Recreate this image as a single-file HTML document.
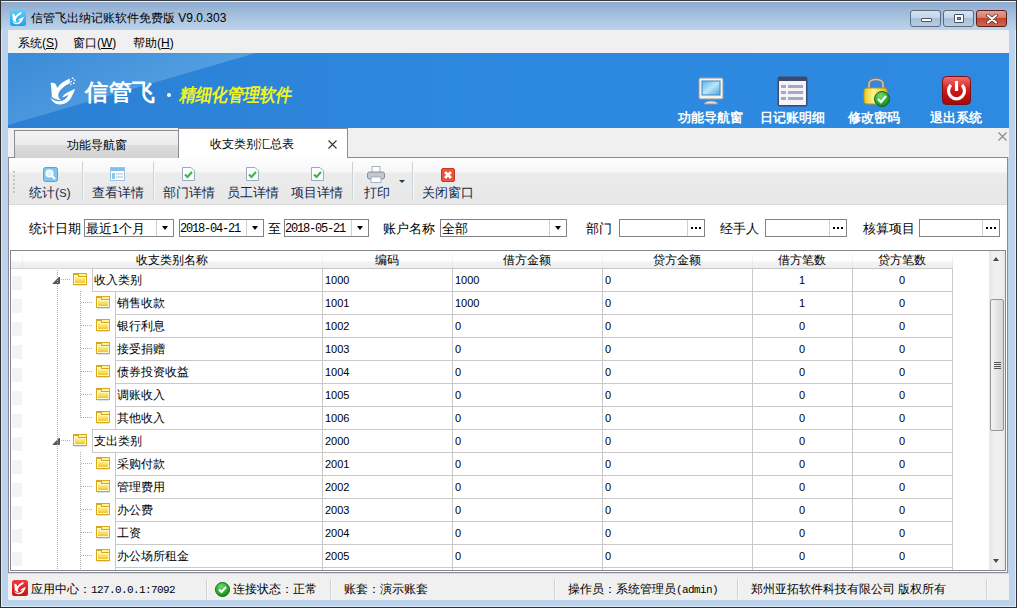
<!DOCTYPE html><html><head><meta charset="utf-8"><style>*{box-sizing:border-box;margin:0;padding:0}
html,body{width:1017px;height:608px;overflow:hidden;background:#bcd3eb;font-family:"Liberation Sans",sans-serif;font-size:12px;color:#000}
.a{position:absolute}
#frame{left:0;top:0;width:1017px;height:608px;border:1px solid #2e2e2e;border-top-color:#3a3a3a;background:#bcd3eb;box-shadow:inset 1px 0 0 #dcecfb,inset -1px 0 0 #dcecfb,inset 0 -1px 0 #dcecfb}
#title{left:1px;top:1px;width:1015px;height:29px;border-top:1px solid #eef4fa;background:linear-gradient(#8eabcf,#a6c0de 50%,#bdd4ec)}
#ttext{left:31px;top:10px;font-size:12px;color:#000;white-space:nowrap}
.wb{top:10px;height:17px;border:1px solid #5b6b80;border-radius:3px;background:linear-gradient(#d6e3f1 0,#c4d6ea 45%,#a9c0da 50%,#b9cde3 100%)}
#menu{left:8px;top:30px;width:1001px;height:23px;background:#f0f0f0}
#menu span{position:absolute;top:5px;font-size:12px;color:#000;white-space:nowrap}
#banner{left:8px;top:53px;width:1001px;height:75px;background:#2d8ae0;overflow:hidden}
.bt{position:absolute;top:56px;color:#fff;font-weight:bold;font-size:13px;white-space:nowrap;width:80px;text-align:center}
#tabstrip{left:8px;top:128px;width:1001px;height:29px;background:#f0f0f0}
#tab1{left:14px;top:130px;width:165px;height:28px;border:1px solid #898c95;border-bottom:none;background:linear-gradient(#f2f2f2 0,#ebebeb 50%,#dddddd 51%,#d3d3d3 100%)}
#tab2{left:178px;top:128px;width:170px;height:30px;border:1px solid #898c95;border-bottom:none;background:#fff}
#content{left:8px;top:157px;width:1000px;height:416px;background:#fff;border:1px solid #898c95}
#toolbar{left:9px;top:158px;width:998px;height:47px;background:linear-gradient(#fefefe 0,#f7f7f7 14px,#ececec 15px,#e7e7e7 45px);border-bottom:1px solid #dadada}
.tt{position:absolute;top:27px;color:#142a4c;font-size:12.5px;white-space:nowrap}
.tsep{position:absolute;top:4px;width:2px;height:37px;border-left:1px solid #cdd0d4;border-right:1px solid #fafafa}
#status{left:8px;top:573px;width:1001px;height:27px;background:#f0f0f0;border-top:1px solid #d8d8d8}
.lbl{position:absolute;font-size:12.5px;color:#000;white-space:nowrap}
.box{position:absolute;top:219px;height:18px;border:1px solid #828282;background:#fff}
.btn{position:absolute;top:0;bottom:0;right:0;width:17px;border-left:1px solid #d0d0d0;background:#fff}
.arr{position:absolute;left:5px;top:6px;width:0;height:0;border-left:3.5px solid transparent;border-right:3.5px solid transparent;border-top:4px solid #000}
.dots{position:absolute;left:3px;top:7px;width:11px;height:2px;background:repeating-linear-gradient(90deg,#000 0,#000 2px,transparent 2px,transparent 4px)}
.mono{font-family:"Liberation Mono",monospace;font-size:12px;letter-spacing:-1.2px}
#grid{left:10px;top:250px;width:996px;height:321px;border:1px solid #828790;background:#fff;overflow:hidden}
.hdr{background:linear-gradient(#fff 0,#fff 10px,#f1f2f4 11px,#eceef0 17px);border-bottom:1px solid #d5d5d5}
.ht{top:1px;text-align:center;font-size:12px;color:#000;white-space:nowrap}
.hsep{top:1px;width:1px;height:16px;background:linear-gradient(#fff,#e2e2e2)}
.ind{left:1px;width:10px;height:14px;background:#f3f3f5}
.cell{border:1px solid #c9c9c9;background:transparent}
.nm{font-size:12px;color:#000;white-space:nowrap}
.num{font-family:"Liberation Sans",sans-serif;font-size:11px;color:#000;white-space:nowrap}
.hd{height:1px;background:repeating-linear-gradient(90deg,#b0b0b0 0,#b0b0b0 1px,transparent 1px,transparent 2px)}
.vd{width:1px;background:repeating-linear-gradient(180deg,#b0b0b0 0,#b0b0b0 1px,transparent 1px,transparent 2px)}
#vsb{left:978px;top:0;width:16px;height:319px;background:linear-gradient(90deg,#e6e6e6,#f0f0f0 30%,#f0f0f0 70%,#e8e8e8)}
.sbup{left:4px;top:6px;width:0;height:0;border-left:3.5px solid transparent;border-right:3.5px solid transparent;border-bottom:4px solid #4a4a4a}
.sbdn{left:4px;top:308px;width:0;height:0;border-left:3.5px solid transparent;border-right:3.5px solid transparent;border-top:4px solid #4a4a4a}
.sbthumb{left:1px;top:48px;width:14px;height:132px;border:1px solid #979797;border-radius:2px;background:linear-gradient(90deg,#f4f4f4,#e6e6e6 50%,#d6d6d6)}
.grip{left:3px;top:62px;width:7px;height:7px;background:repeating-linear-gradient(180deg,#555 0,#555 1px,transparent 1px,transparent 2px)}
.sl{font-size:12px}
.sl .mono{font-size:11px;letter-spacing:-0.6px}
</style></head><body>
<svg width="0" height="0" style="position:absolute"><defs><linearGradient id="fgrad" x1="0" y1="0" x2="0" y2="1"><stop offset="0" stop-color="#fff7b0"/><stop offset="0.5" stop-color="#fbe46a"/><stop offset="1" stop-color="#f0c434"/></linearGradient></defs></svg>
<div id="frame" class="a"></div>
<div id="title" class="a"></div>
<svg class="a" style="left:10px;top:10px" width="16" height="16" viewBox="0 0 16 16"><defs><linearGradient id="ig" x1="0" y1="0" x2="0" y2="1"><stop offset="0" stop-color="#62ccf6"/><stop offset="1" stop-color="#1ea2e8"/></linearGradient></defs><rect x="0" y="0" width="16" height="16" rx="2.5" fill="url(#ig)"/>
<g transform="translate(-1,-2.3) scale(0.48)"><path d="M6.6,12.8 C8.5,12.6 10.5,12.8 11.5,14 C12.5,15.5 13,17 13.2,18.1 C16,14 20,11 25.7,8.6 L25.9,13.2 C20,16 15.5,20 14.5,23.5 C13.8,26 14.5,28.5 17.1,30.3 C12,30 8.5,28 7.9,26.3 C7.5,21 7.2,16 6.6,12.8 Z" fill="#fff"/>
<path d="M6.3,27 C7.5,31 11,34.5 15.5,34.5 C21,34.5 26,31 28,26 C29.5,23 30.5,21 30.9,18.7 C28,20.5 24,21.5 21,24 C19.5,25.5 18.5,26.5 18.4,27.3 C20.5,27 22.5,26 24.5,24.5 C23,28.5 20,31 15.5,31.2 C11,31.3 8,29.5 6.3,27 Z" fill="#fff"/></g></svg>
<div id="ttext" class="a">信管飞出纳记账软件免费版 V9.0.303</div>
<div class="a wb" style="left:910px;width:31px"><div class="a" style="left:10px;top:7px;width:11px;height:4px;background:#fff;border:1px solid #4a5464;border-radius:1px"></div></div>
<div class="a wb" style="left:943px;width:31px"><div class="a" style="left:10px;top:3px;width:10px;height:9px;background:#fff;border:1px solid #4a5464;border-radius:1px"><div class="a" style="left:2px;top:2px;width:4px;height:3px;background:#8aa4c4;border:1px solid #4a5464"></div></div></div>
<div class="a wb" style="left:976px;width:31px;border-color:#5a1f1f;background:linear-gradient(#e8a090 0,#d97a66 45%,#c2462e 50%,#d4654a 100%)">
<svg class="a" style="left:9px;top:3px" width="12" height="10" viewBox="0 0 12 10"><path d="M2 1.5 L10 8.5 M10 1.5 L2 8.5" stroke="#4a2a2a" stroke-width="3.6" stroke-linecap="round"/><path d="M2 1.5 L10 8.5 M10 1.5 L2 8.5" stroke="#fff" stroke-width="2.2" stroke-linecap="round"/></svg></div>
<div id="menu" class="a">
 <span style="left:10px">系统(<u>S</u>)</span>
 <span style="left:65px">窗口(<u>W</u>)</span>
 <span style="left:125px">帮助(<u>H</u>)</span>
</div>
<div id="banner" class="a">
<svg class="a" style="left:0;top:0" width="1001" height="75">
<defs>
<linearGradient id="bl" x1="0" y1="0" x2="1" y2="0.6"><stop offset="0" stop-color="#3a8ad6"/><stop offset="1" stop-color="#5ea6e6"/></linearGradient>
<linearGradient id="bd" x1="0" y1="0" x2="1" y2="0"><stop offset="0" stop-color="#2b80d3"/><stop offset="0.5" stop-color="#2d89df"/><stop offset="1" stop-color="#2e8ae0"/></linearGradient>
</defs>
<rect width="1001" height="75" fill="url(#bd)"/>
<polygon points="0,0 248,0 0,72" fill="url(#bl)"/>
</svg>
<svg class="a" style="left:36px;top:17px" width="40" height="40" viewBox="0 0 40 40">
<path d="M6.6,12.8 C8.5,12.6 10.5,12.8 11.5,14 C12.5,15.5 13,17 13.2,18.1 C16,14 20,11 25.7,8.6 L25.9,13.2 C20,16 15.5,20 14.5,23.5 C13.8,26 14.5,28.5 17.1,30.3 C12,30 8.5,28 7.9,26.3 C7.5,21 7.2,16 6.6,12.8 Z" fill="#fff"/>
<path d="M6.3,27 C7.5,31 11,34.5 15.5,34.5 C21,34.5 26,31 28,26 C29.5,23 30.5,21 30.9,18.7 C28,20.5 24,21.5 21,24 C19.5,25.5 18.5,26.5 18.4,27.3 C20.5,27 22.5,26 24.5,24.5 C23,28.5 20,31 15.5,31.2 C11,31.3 8,29.5 6.3,27 Z" fill="#fff"/>
<circle cx="28.6" cy="8.2" r="0.9" fill="#fff" opacity="0.9"/><circle cx="30.6" cy="10.2" r="0.9" fill="#fff" opacity="0.9"/><circle cx="27.2" cy="11.6" r="0.9" fill="#fff" opacity="0.9"/><circle cx="29.8" cy="13.2" r="0.9" fill="#fff" opacity="0.9"/><circle cx="26.8" cy="14.4" r="0.8" fill="#fff" opacity="0.8"/>
</svg>
<div class="a" style="left:77px;top:24px;font-size:23px;font-weight:bold;color:#fff;white-space:nowrap;letter-spacing:0.5px">信管飞</div>
<div class="a" style="left:159px;top:40px;width:4px;height:4px;border-radius:2px;background:#fff"></div>
<div class="a" style="left:174px;top:31px;font-size:16px;font-weight:bold;color:#f2f51e;white-space:nowrap;transform:skewX(-10deg) scaleY(1.12);transform-origin:0 0">精细化管理软件</div>
<!-- right icons -->
<svg class="a" style="left:690px;top:24px" width="26" height="28" viewBox="0 0 26 28">
<defs><linearGradient id="scr" x1="0" y1="0" x2="1" y2="1"><stop offset="0" stop-color="#5ab4ec"/><stop offset="0.5" stop-color="#b8e6fc"/><stop offset="1" stop-color="#4aa6e0"/></linearGradient></defs>
<rect x="1" y="1" width="24" height="21" rx="1.5" fill="#f2f2f2" stroke="#9a9a9a"/>
<rect x="4" y="4" width="18" height="14" fill="url(#scr)" stroke="#3e86c0"/>
<path d="M6 27 C7 23 19 23 20 27z" fill="#e4e4e4" stroke="#9a9a9a"/>
</svg>
<svg class="a" style="left:769px;top:23px" width="31" height="31" viewBox="0 0 31 31">
<rect x="0.5" y="0.5" width="30" height="30" rx="2" fill="#3c4a6e"/>
<rect x="2" y="5" width="27" height="24" fill="#f4f4f8"/>
<rect x="4" y="9" width="5" height="3" fill="#a8a8c4"/><rect x="11" y="9" width="15" height="3" fill="#a8a8c4"/>
<rect x="4" y="15" width="5" height="3" fill="#a8a8c4"/><rect x="11" y="15" width="15" height="3" fill="#a8a8c4"/>
<rect x="4" y="21" width="5" height="3" fill="#a8a8c4"/><rect x="11" y="21" width="15" height="3" fill="#a8a8c4"/>
</svg>
<svg class="a" style="left:855px;top:23px" width="28" height="31" viewBox="0 0 28 31">
<defs><linearGradient id="lk" x1="0" y1="0" x2="1" y2="0"><stop offset="0" stop-color="#e8c820"/><stop offset="0.4" stop-color="#fff48a"/><stop offset="1" stop-color="#e0b810"/></linearGradient>
<radialGradient id="gc" cx="0.4" cy="0.3" r="0.7"><stop offset="0" stop-color="#6ee06a"/><stop offset="1" stop-color="#108a18"/></radialGradient></defs>
<path d="M6 13 V8 C6 2 20 2 20 8 V13" fill="none" stroke="#7a7a7a" stroke-width="3.5"/>
<path d="M6 13 V8 C6 2 20 2 20 8 V13" fill="none" stroke="#c8c8c8" stroke-width="1.5"/>
<rect x="1" y="12" width="23" height="16" rx="3" fill="url(#lk)" stroke="#b89410"/>
<circle cx="19" cy="23" r="7.5" fill="url(#gc)" stroke="#0c6a12"/>
<path d="M15 23 L18 26 L23 20" fill="none" stroke="#fff" stroke-width="2.2"/>
</svg>
<svg class="a" style="left:934px;top:23px" width="29" height="30" viewBox="0 0 29 30">
<defs><linearGradient id="pw" x1="0" y1="0" x2="0" y2="1"><stop offset="0" stop-color="#f07070"/><stop offset="0.5" stop-color="#d01818"/><stop offset="1" stop-color="#a00808"/></linearGradient></defs>
<rect x="0.5" y="0.5" width="28" height="28" rx="4" fill="url(#pw)" stroke="#7a1010"/>
<path d="M9 9 A8 8 0 1 0 20 9" fill="none" stroke="#fff" stroke-width="3.2"/>
<line x1="14.5" y1="5" x2="14.5" y2="15" stroke="#fff" stroke-width="3.2"/>
</svg>
<div class="bt" style="left:662px">功能导航窗</div>
<div class="bt" style="left:744px">日记账明细</div>
<div class="bt" style="left:826px">修改密码</div>
<div class="bt" style="left:908px">退出系统</div>
</div>
<div id="tabstrip" class="a"></div>
<div id="content" class="a"></div>
<div id="tab1" class="a"><div class="a" style="left:52px;top:6px;font-size:12px;color:#000;white-space:nowrap">功能导航窗</div></div>
<div id="tab2" class="a"><div class="a" style="left:31px;top:7px;font-size:12px;color:#000;white-space:nowrap">收支类别汇总表</div>
<svg class="a" style="left:149px;top:11px" width="9" height="9"><path d="M0.5 0.5 L8.5 8.5 M8.5 0.5 L0.5 8.5" stroke="#333" stroke-width="1.1"/></svg></div>
<svg class="a" style="left:998px;top:132px" width="9" height="9"><path d="M0.5 0.5 L8.5 8.5 M8.5 0.5 L0.5 8.5" stroke="#888" stroke-width="1.1"/></svg>
<div id="toolbar" class="a">
 <div class="a" style="left:4px;top:13px;width:2px;height:22px;background:repeating-linear-gradient(180deg,#c4c4c4 0,#c4c4c4 2px,transparent 2px,transparent 4px)"></div>
 <svg class="a" style="left:34px;top:9px" width="15" height="15" viewBox="0 0 15 15"><rect x="0.5" y="0.5" width="14" height="14" rx="2" fill="#7dc7f2" stroke="#4aa8e0"/><circle cx="6.5" cy="6.5" r="3.3" fill="#e0f4ff" stroke="#fff" stroke-width="1.4"/><line x1="9" y1="9" x2="12" y2="12" stroke="#fff" stroke-width="2"/></svg>
 <div class="tt" style="left:20px">统计(<span style="font-size:11px">S</span>)</div>
 <div class="tsep" style="left:73px"></div>
 <svg class="a" style="left:101px;top:9px" width="15" height="14" viewBox="0 0 15 14"><rect x="0.5" y="0.5" width="14" height="13" fill="#fff" stroke="#9cc4e4"/><rect x="1" y="1" width="13" height="3" fill="#7ec0ee"/><rect x="2" y="6" width="3" height="6" fill="#8cc4ec"/><line x1="6" y1="7" x2="13" y2="7" stroke="#a8b8c8"/><line x1="6" y1="10" x2="13" y2="10" stroke="#a8b8c8"/></svg>
 <div class="tt" style="left:83px">查看详情</div>
 <div class="tsep" style="left:144px"></div>
 <svg class="a" style="left:173px;top:9px" width="13" height="14" viewBox="0 0 13 14"><path d="M0.5 0.5 H9 L12.5 4 V13.5 H0.5z" fill="#fafcff" stroke="#9aaac0"/><path d="M3 7.5 L5.5 10 L10 5" fill="none" stroke="#3cb43c" stroke-width="2"/></svg>
 <div class="tt" style="left:154px">部门详情</div>
 <svg class="a" style="left:237px;top:9px" width="13" height="14" viewBox="0 0 13 14"><path d="M0.5 0.5 H9 L12.5 4 V13.5 H0.5z" fill="#fafcff" stroke="#9aaac0"/><path d="M3 7.5 L5.5 10 L10 5" fill="none" stroke="#3cb43c" stroke-width="2"/></svg>
 <div class="tt" style="left:218px">员工详情</div>
 <svg class="a" style="left:302px;top:9px" width="13" height="14" viewBox="0 0 13 14"><path d="M0.5 0.5 H9 L12.5 4 V13.5 H0.5z" fill="#fafcff" stroke="#9aaac0"/><path d="M3 7.5 L5.5 10 L10 5" fill="none" stroke="#3cb43c" stroke-width="2"/></svg>
 <div class="tt" style="left:282px">项目详情</div>
 <div class="tsep" style="left:343px"></div>
 <svg class="a" style="left:358px;top:8px" width="18" height="17" viewBox="0 0 18 17"><rect x="5" y="0.5" width="8" height="6" fill="#fff" stroke="#a0b4c8"/><rect x="0.5" y="6" width="17" height="7" rx="2" fill="#c4c8cc" stroke="#8a8e92"/><rect x="4" y="11" width="10" height="5.5" fill="#fff" stroke="#a0b4c8"/></svg>
 <div class="tt" style="left:355px">打印</div>
 <div class="a" style="left:390px;top:22px;width:0;height:0;border-left:3px solid transparent;border-right:3px solid transparent;border-top:3px solid #1e395b"></div>
 <div class="tsep" style="left:403px"></div>
 <svg class="a" style="left:432px;top:10px" width="14" height="14" viewBox="0 0 14 14"><rect x="0.5" y="0.5" width="13" height="13" rx="1.5" fill="#e8553a" stroke="#c83a20"/><path d="M4 4 L10 10 M10 4 L4 10" stroke="#fff" stroke-width="2.6"/></svg>
 <div class="tt" style="left:413px">关闭窗口</div>
</div>
<!-- filter row -->
<div class="lbl" style="left:29px;top:221px">统计日期</div>
<div class="box" style="left:84px;width:90px"><div class="a" style="left:1px;top:1px;font-size:12.5px;white-space:nowrap">最近1个月</div><div class="btn"><div class="arr"></div></div></div>
<div class="box" style="left:179px;width:85px"><div class="a mono" style="left:0px;top:2px">2018-04-21</div><div class="btn"><div class="arr"></div></div></div>
<div class="lbl" style="left:268px;top:221px">至</div>
<div class="box" style="left:284px;width:85px"><div class="a mono" style="left:0px;top:2px">2018-05-21</div><div class="btn"><div class="arr"></div></div></div>
<div class="lbl" style="left:383px;top:221px">账户名称</div>
<div class="box" style="left:440px;width:127px"><div class="a" style="left:1px;top:1px;font-size:12.5px;white-space:nowrap">全部</div><div class="btn"><div class="arr"></div></div></div>
<div class="lbl" style="left:586px;top:221px">部门</div>
<div class="box" style="left:619px;width:86px"><div class="btn"><div class="dots"></div></div></div>
<div class="lbl" style="left:720px;top:221px">经手人</div>
<div class="box" style="left:765px;width:82px"><div class="btn"><div class="dots"></div></div></div>
<div class="lbl" style="left:863px;top:221px">核算项目</div>
<div class="box" style="left:919px;width:81px"><div class="btn"><div class="dots"></div></div></div>

<div id="grid" class="a">
<div class="a hdr" style="left:0;top:0;width:942px;height:18px"></div>
<div class="a ht" style="left:11px;width:300px">收支类别名称</div>
<div class="a hsep" style="left:11px"></div>
<div class="a ht" style="left:311px;width:130px">编码</div>
<div class="a hsep" style="left:311px"></div>
<div class="a ht" style="left:441px;width:150px">借方金额</div>
<div class="a hsep" style="left:441px"></div>
<div class="a ht" style="left:591px;width:150px">贷方金额</div>
<div class="a hsep" style="left:591px"></div>
<div class="a ht" style="left:741px;width:100px">借方笔数</div>
<div class="a hsep" style="left:741px"></div>
<div class="a ht" style="left:841px;width:100px">贷方笔数</div>
<div class="a hsep" style="left:841px"></div>
<div class="a hsep" style="left:941px"></div>
<div class="a ind" style="top:25px"></div>
<div class="a cell" style="left:81px;top:17px;width:231px;height:24px"></div>
<div class="a cell" style="left:311px;top:17px;width:131px;height:24px"></div>
<div class="a cell" style="left:441px;top:17px;width:151px;height:24px"></div>
<div class="a cell" style="left:591px;top:17px;width:151px;height:24px"></div>
<div class="a cell" style="left:741px;top:17px;width:101px;height:24px"></div>
<div class="a cell" style="left:841px;top:17px;width:101px;height:24px"></div>
<div class="a nm" style="left:83px;top:21px">收入类别</div>
<div class="a num" style="left:314px;top:23px">1000</div>
<div class="a num" style="left:444px;top:23px">1000</div>
<div class="a num" style="left:594px;top:23px">0</div>
<div class="a num" style="left:741px;width:100px;text-align:center;top:23px">1</div>
<div class="a num" style="left:841px;width:100px;text-align:center;top:23px">0</div>
<svg class="a" style="left:41px;top:25px" width="9" height="9"><path d="M1 7.5 L7.5 1 V7.5z" fill="#595959" stroke="#3c3c3c" stroke-width="0.8"/></svg>
<div class="a hd" style="left:50px;top:28px;width:9px"></div>
<svg class="a" style="left:62px;top:22px" width="14" height="13" viewBox="0 0 14 13" shape-rendering="crispEdges">
<rect x="1" y="12" width="12" height="1" fill="#c8cde0" opacity="0.6"/>
<rect x="0" y="0" width="14" height="12" fill="#d8a71c"/>
<path d="M1 2 H5 V4 H13 V11 H1 Z" fill="#fff8c8"/>
<path d="M2 3 H4 V5 H12 V10 H2 Z" fill="url(#fgrad)"/>
<rect x="6" y="1" width="7" height="2" fill="#fff2a0"/>
</svg>
<div class="a ind" style="top:48px"></div>
<div class="a cell" style="left:104px;top:40px;width:208px;height:24px"></div>
<div class="a cell" style="left:311px;top:40px;width:131px;height:24px"></div>
<div class="a cell" style="left:441px;top:40px;width:151px;height:24px"></div>
<div class="a cell" style="left:591px;top:40px;width:151px;height:24px"></div>
<div class="a cell" style="left:741px;top:40px;width:101px;height:24px"></div>
<div class="a cell" style="left:841px;top:40px;width:101px;height:24px"></div>
<div class="a nm" style="left:106px;top:44px">销售收款</div>
<div class="a num" style="left:314px;top:46px">1001</div>
<div class="a num" style="left:444px;top:46px">1000</div>
<div class="a num" style="left:594px;top:46px">0</div>
<div class="a num" style="left:741px;width:100px;text-align:center;top:46px">1</div>
<div class="a num" style="left:841px;width:100px;text-align:center;top:46px">0</div>
<div class="a hd" style="left:70px;top:51px;width:11px"></div>
<svg class="a" style="left:85px;top:45px" width="14" height="13" viewBox="0 0 14 13" shape-rendering="crispEdges">
<rect x="1" y="12" width="12" height="1" fill="#c8cde0" opacity="0.6"/>
<rect x="0" y="0" width="14" height="12" fill="#d8a71c"/>
<path d="M1 2 H5 V4 H13 V11 H1 Z" fill="#fff8c8"/>
<path d="M2 3 H4 V5 H12 V10 H2 Z" fill="url(#fgrad)"/>
<rect x="6" y="1" width="7" height="2" fill="#fff2a0"/>
</svg>
<div class="a ind" style="top:71px"></div>
<div class="a cell" style="left:104px;top:63px;width:208px;height:24px"></div>
<div class="a cell" style="left:311px;top:63px;width:131px;height:24px"></div>
<div class="a cell" style="left:441px;top:63px;width:151px;height:24px"></div>
<div class="a cell" style="left:591px;top:63px;width:151px;height:24px"></div>
<div class="a cell" style="left:741px;top:63px;width:101px;height:24px"></div>
<div class="a cell" style="left:841px;top:63px;width:101px;height:24px"></div>
<div class="a nm" style="left:106px;top:67px">银行利息</div>
<div class="a num" style="left:314px;top:69px">1002</div>
<div class="a num" style="left:444px;top:69px">0</div>
<div class="a num" style="left:594px;top:69px">0</div>
<div class="a num" style="left:741px;width:100px;text-align:center;top:69px">0</div>
<div class="a num" style="left:841px;width:100px;text-align:center;top:69px">0</div>
<div class="a hd" style="left:70px;top:74px;width:11px"></div>
<svg class="a" style="left:85px;top:68px" width="14" height="13" viewBox="0 0 14 13" shape-rendering="crispEdges">
<rect x="1" y="12" width="12" height="1" fill="#c8cde0" opacity="0.6"/>
<rect x="0" y="0" width="14" height="12" fill="#d8a71c"/>
<path d="M1 2 H5 V4 H13 V11 H1 Z" fill="#fff8c8"/>
<path d="M2 3 H4 V5 H12 V10 H2 Z" fill="url(#fgrad)"/>
<rect x="6" y="1" width="7" height="2" fill="#fff2a0"/>
</svg>
<div class="a ind" style="top:94px"></div>
<div class="a cell" style="left:104px;top:86px;width:208px;height:24px"></div>
<div class="a cell" style="left:311px;top:86px;width:131px;height:24px"></div>
<div class="a cell" style="left:441px;top:86px;width:151px;height:24px"></div>
<div class="a cell" style="left:591px;top:86px;width:151px;height:24px"></div>
<div class="a cell" style="left:741px;top:86px;width:101px;height:24px"></div>
<div class="a cell" style="left:841px;top:86px;width:101px;height:24px"></div>
<div class="a nm" style="left:106px;top:90px">接受捐赠</div>
<div class="a num" style="left:314px;top:92px">1003</div>
<div class="a num" style="left:444px;top:92px">0</div>
<div class="a num" style="left:594px;top:92px">0</div>
<div class="a num" style="left:741px;width:100px;text-align:center;top:92px">0</div>
<div class="a num" style="left:841px;width:100px;text-align:center;top:92px">0</div>
<div class="a hd" style="left:70px;top:97px;width:11px"></div>
<svg class="a" style="left:85px;top:91px" width="14" height="13" viewBox="0 0 14 13" shape-rendering="crispEdges">
<rect x="1" y="12" width="12" height="1" fill="#c8cde0" opacity="0.6"/>
<rect x="0" y="0" width="14" height="12" fill="#d8a71c"/>
<path d="M1 2 H5 V4 H13 V11 H1 Z" fill="#fff8c8"/>
<path d="M2 3 H4 V5 H12 V10 H2 Z" fill="url(#fgrad)"/>
<rect x="6" y="1" width="7" height="2" fill="#fff2a0"/>
</svg>
<div class="a ind" style="top:117px"></div>
<div class="a cell" style="left:104px;top:109px;width:208px;height:24px"></div>
<div class="a cell" style="left:311px;top:109px;width:131px;height:24px"></div>
<div class="a cell" style="left:441px;top:109px;width:151px;height:24px"></div>
<div class="a cell" style="left:591px;top:109px;width:151px;height:24px"></div>
<div class="a cell" style="left:741px;top:109px;width:101px;height:24px"></div>
<div class="a cell" style="left:841px;top:109px;width:101px;height:24px"></div>
<div class="a nm" style="left:106px;top:113px">债券投资收益</div>
<div class="a num" style="left:314px;top:115px">1004</div>
<div class="a num" style="left:444px;top:115px">0</div>
<div class="a num" style="left:594px;top:115px">0</div>
<div class="a num" style="left:741px;width:100px;text-align:center;top:115px">0</div>
<div class="a num" style="left:841px;width:100px;text-align:center;top:115px">0</div>
<div class="a hd" style="left:70px;top:120px;width:11px"></div>
<svg class="a" style="left:85px;top:114px" width="14" height="13" viewBox="0 0 14 13" shape-rendering="crispEdges">
<rect x="1" y="12" width="12" height="1" fill="#c8cde0" opacity="0.6"/>
<rect x="0" y="0" width="14" height="12" fill="#d8a71c"/>
<path d="M1 2 H5 V4 H13 V11 H1 Z" fill="#fff8c8"/>
<path d="M2 3 H4 V5 H12 V10 H2 Z" fill="url(#fgrad)"/>
<rect x="6" y="1" width="7" height="2" fill="#fff2a0"/>
</svg>
<div class="a ind" style="top:140px"></div>
<div class="a cell" style="left:104px;top:132px;width:208px;height:24px"></div>
<div class="a cell" style="left:311px;top:132px;width:131px;height:24px"></div>
<div class="a cell" style="left:441px;top:132px;width:151px;height:24px"></div>
<div class="a cell" style="left:591px;top:132px;width:151px;height:24px"></div>
<div class="a cell" style="left:741px;top:132px;width:101px;height:24px"></div>
<div class="a cell" style="left:841px;top:132px;width:101px;height:24px"></div>
<div class="a nm" style="left:106px;top:136px">调账收入</div>
<div class="a num" style="left:314px;top:138px">1005</div>
<div class="a num" style="left:444px;top:138px">0</div>
<div class="a num" style="left:594px;top:138px">0</div>
<div class="a num" style="left:741px;width:100px;text-align:center;top:138px">0</div>
<div class="a num" style="left:841px;width:100px;text-align:center;top:138px">0</div>
<div class="a hd" style="left:70px;top:143px;width:11px"></div>
<svg class="a" style="left:85px;top:137px" width="14" height="13" viewBox="0 0 14 13" shape-rendering="crispEdges">
<rect x="1" y="12" width="12" height="1" fill="#c8cde0" opacity="0.6"/>
<rect x="0" y="0" width="14" height="12" fill="#d8a71c"/>
<path d="M1 2 H5 V4 H13 V11 H1 Z" fill="#fff8c8"/>
<path d="M2 3 H4 V5 H12 V10 H2 Z" fill="url(#fgrad)"/>
<rect x="6" y="1" width="7" height="2" fill="#fff2a0"/>
</svg>
<div class="a ind" style="top:163px"></div>
<div class="a cell" style="left:104px;top:155px;width:208px;height:24px"></div>
<div class="a cell" style="left:311px;top:155px;width:131px;height:24px"></div>
<div class="a cell" style="left:441px;top:155px;width:151px;height:24px"></div>
<div class="a cell" style="left:591px;top:155px;width:151px;height:24px"></div>
<div class="a cell" style="left:741px;top:155px;width:101px;height:24px"></div>
<div class="a cell" style="left:841px;top:155px;width:101px;height:24px"></div>
<div class="a nm" style="left:106px;top:159px">其他收入</div>
<div class="a num" style="left:314px;top:161px">1006</div>
<div class="a num" style="left:444px;top:161px">0</div>
<div class="a num" style="left:594px;top:161px">0</div>
<div class="a num" style="left:741px;width:100px;text-align:center;top:161px">0</div>
<div class="a num" style="left:841px;width:100px;text-align:center;top:161px">0</div>
<div class="a hd" style="left:70px;top:166px;width:11px"></div>
<svg class="a" style="left:85px;top:160px" width="14" height="13" viewBox="0 0 14 13" shape-rendering="crispEdges">
<rect x="1" y="12" width="12" height="1" fill="#c8cde0" opacity="0.6"/>
<rect x="0" y="0" width="14" height="12" fill="#d8a71c"/>
<path d="M1 2 H5 V4 H13 V11 H1 Z" fill="#fff8c8"/>
<path d="M2 3 H4 V5 H12 V10 H2 Z" fill="url(#fgrad)"/>
<rect x="6" y="1" width="7" height="2" fill="#fff2a0"/>
</svg>
<div class="a ind" style="top:186px"></div>
<div class="a cell" style="left:81px;top:178px;width:231px;height:24px"></div>
<div class="a cell" style="left:311px;top:178px;width:131px;height:24px"></div>
<div class="a cell" style="left:441px;top:178px;width:151px;height:24px"></div>
<div class="a cell" style="left:591px;top:178px;width:151px;height:24px"></div>
<div class="a cell" style="left:741px;top:178px;width:101px;height:24px"></div>
<div class="a cell" style="left:841px;top:178px;width:101px;height:24px"></div>
<div class="a nm" style="left:83px;top:182px">支出类别</div>
<div class="a num" style="left:314px;top:184px">2000</div>
<div class="a num" style="left:444px;top:184px">0</div>
<div class="a num" style="left:594px;top:184px">0</div>
<div class="a num" style="left:741px;width:100px;text-align:center;top:184px">0</div>
<div class="a num" style="left:841px;width:100px;text-align:center;top:184px">0</div>
<svg class="a" style="left:41px;top:186px" width="9" height="9"><path d="M1 7.5 L7.5 1 V7.5z" fill="#595959" stroke="#3c3c3c" stroke-width="0.8"/></svg>
<div class="a hd" style="left:50px;top:189px;width:9px"></div>
<svg class="a" style="left:62px;top:183px" width="14" height="13" viewBox="0 0 14 13" shape-rendering="crispEdges">
<rect x="1" y="12" width="12" height="1" fill="#c8cde0" opacity="0.6"/>
<rect x="0" y="0" width="14" height="12" fill="#d8a71c"/>
<path d="M1 2 H5 V4 H13 V11 H1 Z" fill="#fff8c8"/>
<path d="M2 3 H4 V5 H12 V10 H2 Z" fill="url(#fgrad)"/>
<rect x="6" y="1" width="7" height="2" fill="#fff2a0"/>
</svg>
<div class="a ind" style="top:209px"></div>
<div class="a cell" style="left:104px;top:201px;width:208px;height:24px"></div>
<div class="a cell" style="left:311px;top:201px;width:131px;height:24px"></div>
<div class="a cell" style="left:441px;top:201px;width:151px;height:24px"></div>
<div class="a cell" style="left:591px;top:201px;width:151px;height:24px"></div>
<div class="a cell" style="left:741px;top:201px;width:101px;height:24px"></div>
<div class="a cell" style="left:841px;top:201px;width:101px;height:24px"></div>
<div class="a nm" style="left:106px;top:205px">采购付款</div>
<div class="a num" style="left:314px;top:207px">2001</div>
<div class="a num" style="left:444px;top:207px">0</div>
<div class="a num" style="left:594px;top:207px">0</div>
<div class="a num" style="left:741px;width:100px;text-align:center;top:207px">0</div>
<div class="a num" style="left:841px;width:100px;text-align:center;top:207px">0</div>
<div class="a hd" style="left:70px;top:212px;width:11px"></div>
<svg class="a" style="left:85px;top:206px" width="14" height="13" viewBox="0 0 14 13" shape-rendering="crispEdges">
<rect x="1" y="12" width="12" height="1" fill="#c8cde0" opacity="0.6"/>
<rect x="0" y="0" width="14" height="12" fill="#d8a71c"/>
<path d="M1 2 H5 V4 H13 V11 H1 Z" fill="#fff8c8"/>
<path d="M2 3 H4 V5 H12 V10 H2 Z" fill="url(#fgrad)"/>
<rect x="6" y="1" width="7" height="2" fill="#fff2a0"/>
</svg>
<div class="a ind" style="top:232px"></div>
<div class="a cell" style="left:104px;top:224px;width:208px;height:24px"></div>
<div class="a cell" style="left:311px;top:224px;width:131px;height:24px"></div>
<div class="a cell" style="left:441px;top:224px;width:151px;height:24px"></div>
<div class="a cell" style="left:591px;top:224px;width:151px;height:24px"></div>
<div class="a cell" style="left:741px;top:224px;width:101px;height:24px"></div>
<div class="a cell" style="left:841px;top:224px;width:101px;height:24px"></div>
<div class="a nm" style="left:106px;top:228px">管理费用</div>
<div class="a num" style="left:314px;top:230px">2002</div>
<div class="a num" style="left:444px;top:230px">0</div>
<div class="a num" style="left:594px;top:230px">0</div>
<div class="a num" style="left:741px;width:100px;text-align:center;top:230px">0</div>
<div class="a num" style="left:841px;width:100px;text-align:center;top:230px">0</div>
<div class="a hd" style="left:70px;top:235px;width:11px"></div>
<svg class="a" style="left:85px;top:229px" width="14" height="13" viewBox="0 0 14 13" shape-rendering="crispEdges">
<rect x="1" y="12" width="12" height="1" fill="#c8cde0" opacity="0.6"/>
<rect x="0" y="0" width="14" height="12" fill="#d8a71c"/>
<path d="M1 2 H5 V4 H13 V11 H1 Z" fill="#fff8c8"/>
<path d="M2 3 H4 V5 H12 V10 H2 Z" fill="url(#fgrad)"/>
<rect x="6" y="1" width="7" height="2" fill="#fff2a0"/>
</svg>
<div class="a ind" style="top:255px"></div>
<div class="a cell" style="left:104px;top:247px;width:208px;height:24px"></div>
<div class="a cell" style="left:311px;top:247px;width:131px;height:24px"></div>
<div class="a cell" style="left:441px;top:247px;width:151px;height:24px"></div>
<div class="a cell" style="left:591px;top:247px;width:151px;height:24px"></div>
<div class="a cell" style="left:741px;top:247px;width:101px;height:24px"></div>
<div class="a cell" style="left:841px;top:247px;width:101px;height:24px"></div>
<div class="a nm" style="left:106px;top:251px">办公费</div>
<div class="a num" style="left:314px;top:253px">2003</div>
<div class="a num" style="left:444px;top:253px">0</div>
<div class="a num" style="left:594px;top:253px">0</div>
<div class="a num" style="left:741px;width:100px;text-align:center;top:253px">0</div>
<div class="a num" style="left:841px;width:100px;text-align:center;top:253px">0</div>
<div class="a hd" style="left:70px;top:258px;width:11px"></div>
<svg class="a" style="left:85px;top:252px" width="14" height="13" viewBox="0 0 14 13" shape-rendering="crispEdges">
<rect x="1" y="12" width="12" height="1" fill="#c8cde0" opacity="0.6"/>
<rect x="0" y="0" width="14" height="12" fill="#d8a71c"/>
<path d="M1 2 H5 V4 H13 V11 H1 Z" fill="#fff8c8"/>
<path d="M2 3 H4 V5 H12 V10 H2 Z" fill="url(#fgrad)"/>
<rect x="6" y="1" width="7" height="2" fill="#fff2a0"/>
</svg>
<div class="a ind" style="top:278px"></div>
<div class="a cell" style="left:104px;top:270px;width:208px;height:24px"></div>
<div class="a cell" style="left:311px;top:270px;width:131px;height:24px"></div>
<div class="a cell" style="left:441px;top:270px;width:151px;height:24px"></div>
<div class="a cell" style="left:591px;top:270px;width:151px;height:24px"></div>
<div class="a cell" style="left:741px;top:270px;width:101px;height:24px"></div>
<div class="a cell" style="left:841px;top:270px;width:101px;height:24px"></div>
<div class="a nm" style="left:106px;top:274px">工资</div>
<div class="a num" style="left:314px;top:276px">2004</div>
<div class="a num" style="left:444px;top:276px">0</div>
<div class="a num" style="left:594px;top:276px">0</div>
<div class="a num" style="left:741px;width:100px;text-align:center;top:276px">0</div>
<div class="a num" style="left:841px;width:100px;text-align:center;top:276px">0</div>
<div class="a hd" style="left:70px;top:281px;width:11px"></div>
<svg class="a" style="left:85px;top:275px" width="14" height="13" viewBox="0 0 14 13" shape-rendering="crispEdges">
<rect x="1" y="12" width="12" height="1" fill="#c8cde0" opacity="0.6"/>
<rect x="0" y="0" width="14" height="12" fill="#d8a71c"/>
<path d="M1 2 H5 V4 H13 V11 H1 Z" fill="#fff8c8"/>
<path d="M2 3 H4 V5 H12 V10 H2 Z" fill="url(#fgrad)"/>
<rect x="6" y="1" width="7" height="2" fill="#fff2a0"/>
</svg>
<div class="a ind" style="top:301px"></div>
<div class="a cell" style="left:104px;top:293px;width:208px;height:24px"></div>
<div class="a cell" style="left:311px;top:293px;width:131px;height:24px"></div>
<div class="a cell" style="left:441px;top:293px;width:151px;height:24px"></div>
<div class="a cell" style="left:591px;top:293px;width:151px;height:24px"></div>
<div class="a cell" style="left:741px;top:293px;width:101px;height:24px"></div>
<div class="a cell" style="left:841px;top:293px;width:101px;height:24px"></div>
<div class="a nm" style="left:106px;top:297px">办公场所租金</div>
<div class="a num" style="left:314px;top:299px">2005</div>
<div class="a num" style="left:444px;top:299px">0</div>
<div class="a num" style="left:594px;top:299px">0</div>
<div class="a num" style="left:741px;width:100px;text-align:center;top:299px">0</div>
<div class="a num" style="left:841px;width:100px;text-align:center;top:299px">0</div>
<div class="a hd" style="left:70px;top:304px;width:11px"></div>
<svg class="a" style="left:85px;top:298px" width="14" height="13" viewBox="0 0 14 13" shape-rendering="crispEdges">
<rect x="1" y="12" width="12" height="1" fill="#c8cde0" opacity="0.6"/>
<rect x="0" y="0" width="14" height="12" fill="#d8a71c"/>
<path d="M1 2 H5 V4 H13 V11 H1 Z" fill="#fff8c8"/>
<path d="M2 3 H4 V5 H12 V10 H2 Z" fill="url(#fgrad)"/>
<rect x="6" y="1" width="7" height="2" fill="#fff2a0"/>
</svg>
<div class="a ind" style="top:324px"></div>
<div class="a cell" style="left:104px;top:316px;width:208px;height:24px"></div>
<div class="a cell" style="left:311px;top:316px;width:131px;height:24px"></div>
<div class="a cell" style="left:441px;top:316px;width:151px;height:24px"></div>
<div class="a cell" style="left:591px;top:316px;width:151px;height:24px"></div>
<div class="a cell" style="left:741px;top:316px;width:101px;height:24px"></div>
<div class="a cell" style="left:841px;top:316px;width:101px;height:24px"></div>
<div class="a vd" style="left:46px;top:19px;height:302px"></div>
<div class="a vd" style="left:69px;top:40px;height:128px"></div>
<div class="a vd" style="left:69px;top:201px;height:118px"></div>
<div class="a" id="vsb"><div class="a sbup"></div><div class="a sbthumb"><div class="a grip"></div></div><div class="a sbdn"></div></div>
</div>
<div id="status" class="a">
<svg class="a" style="left:4px;top:6px" width="16" height="16" viewBox="0 0 16 16"><defs><linearGradient id="rg" x1="0" y1="0" x2="0" y2="1"><stop offset="0" stop-color="#ee3a3a"/><stop offset="1" stop-color="#c81414"/></linearGradient></defs><rect x="0" y="0" width="16" height="16" rx="2.5" fill="url(#rg)"/>
<g transform="translate(-1,-2.3) scale(0.48)"><path d="M6.6,12.8 C8.5,12.6 10.5,12.8 11.5,14 C12.5,15.5 13,17 13.2,18.1 C16,14 20,11 25.7,8.6 L25.9,13.2 C20,16 15.5,20 14.5,23.5 C13.8,26 14.5,28.5 17.1,30.3 C12,30 8.5,28 7.9,26.3 C7.5,21 7.2,16 6.6,12.8 Z" fill="#fff"/>
<path d="M6.3,27 C7.5,31 11,34.5 15.5,34.5 C21,34.5 26,31 28,26 C29.5,23 30.5,21 30.9,18.7 C28,20.5 24,21.5 21,24 C19.5,25.5 18.5,26.5 18.4,27.3 C20.5,27 22.5,26 24.5,24.5 C23,28.5 20,31 15.5,31.2 C11,31.3 8,29.5 6.3,27 Z" fill="#fff"/></g></svg>
<div class="lbl sl" style="left:23px;top:7px">应用中心：<span class="mono">127.0.0.1:7092</span></div>
<div class="a tsep" style="left:198px;top:5px;height:20px"></div>
<svg class="a" style="left:207px;top:8px" width="15" height="15" viewBox="0 0 15 15"><defs><radialGradient id="sg" cx="0.4" cy="0.3" r="0.7"><stop offset="0" stop-color="#70d870"/><stop offset="1" stop-color="#109018"/></radialGradient></defs><circle cx="7.5" cy="7.5" r="7" fill="url(#sg)" stroke="#0a7010"/><path d="M4 7.5 L6.5 10 L11 5" fill="none" stroke="#fff" stroke-width="2"/></svg>
<div class="lbl sl" style="left:225px;top:7px">连接状态：正常</div>
<div class="a tsep" style="left:322px;top:5px;height:20px"></div>
<div class="lbl sl" style="left:336px;top:7px">账套：演示账套</div>
<div class="a tsep" style="left:546px;top:5px;height:20px"></div>
<div class="lbl sl" style="left:560px;top:7px">操作员：系统管理员<span class="mono">(admin)</span></div>
<div class="a tsep" style="left:729px;top:5px;height:20px"></div>
<div class="lbl sl" style="left:743px;top:7px">郑州亚拓软件科技有限公司 版权所有</div>
<div class="a tsep" style="left:978px;top:5px;height:20px"></div>
</div>

</body></html>
